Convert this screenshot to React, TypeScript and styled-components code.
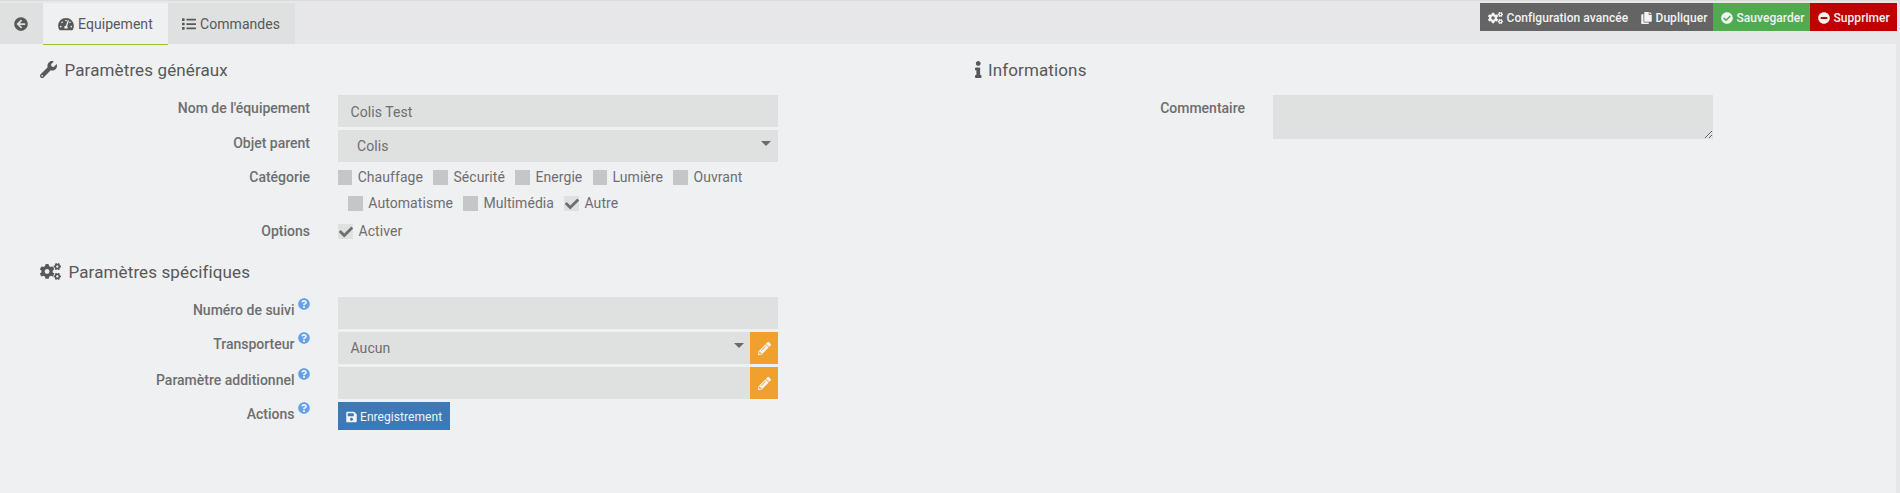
import React from 'react';
import styled, { createGlobalStyle } from 'styled-components';
import {
  FaArrowCircleLeft,
  FaCheck,
  FaCheckCircle,
  FaCogs,
  FaCopy,
  FaInfo,
  FaList,
  FaMinusCircle,
  FaPencilAlt,
  FaQuestionCircle,
  FaSave,
  FaTachometerAlt,
  FaWrench,
} from 'react-icons/fa';

const GlobalStyle = createGlobalStyle`
  *, *::before, *::after { box-sizing: border-box; }
  body {
    margin: 0;
    background: #e7e7e9;
    color: #6e6e6e;
    font: 400 14px/20px Roboto, sans-serif;
    letter-spacing: 0.06px;
    overflow: hidden;
  }
  svg { display: block; flex: none; }
`;

const Page = styled.div`
  display: flex;
  flex-direction: column;
  height: 493px;
  border-top: 1px solid #dcdcde;
`;

const TopBar = styled.header`
  position: relative;
  z-index: 1;
  display: flex;
  justify-content: space-between;
  align-items: flex-start;
  height: 43px;
  padding: 2px 3px 0 0;
`;

const Tabs = styled.nav`
  display: flex;
`;

const Tab = styled.a<{ $width: number; $active?: boolean }>`
  display: flex;
  align-items: center;
  gap: 4px;
  width: ${(p) => p.$width}px;
  height: ${(p) => (p.$active ? 42 : 41)}px;
  padding: 0 0 0 ${(p) => (p.$active ? 15 : 14)}px;
  color: #585858;
  background: ${(p) => (p.$active ? '#eff0f2' : '#dfe1e0')};
  border-bottom: ${(p) => (p.$active ? '1px solid #93c925' : 'none')};
`;

const Actions = styled.div`
  display: flex;
`;

const Button = styled.button<{ $width: number; $color: string; $regular?: boolean }>`
  display: flex;
  align-items: center;
  gap: ${(p) => (p.$regular ? 3 : 3.5)}px;
  width: ${(p) => p.$width}px;
  height: 28px;
  padding: 1px 0 0 8px;
  border: 0;
  background: ${(p) => p.$color};
  color: #f3f3f3;
  font: ${(p) => (p.$regular ? 400 : 500)} 12px/18px Roboto, sans-serif;
  letter-spacing: ${(p) => (p.$regular ? 0.06 : 0.05)}px;
  white-space: nowrap;
`;

const Panel = styled.main`
  flex: 1;
  display: grid;
  grid-template-columns: 935px 1fr;
  width: 1896px;
  background: #eff0f2;
`;

const Column = styled.section`
  padding-top: 14px;
`;

const Legend = styled.h2<{ $gap: number; $height: number }>`
  display: flex;
  align-items: flex-start;
  gap: ${(p) => p.$gap}px;
  height: ${(p) => p.$height}px;
  margin: 0;
  padding-left: 40px;
  color: #585858;
  font-size: 17px;
  font-weight: 400;
  line-height: 24px;
  letter-spacing: 0.12px;

  svg { margin-top: 3px; }
`;

const Row = styled.div<{ $height?: number }>`
  display: flex;
  gap: 28px;
  height: ${(p) => p.$height ?? 35}px;
`;

const Label = styled.label<{ $top?: number }>`
  display: flex;
  justify-content: flex-end;
  gap: 3.5px;
  width: 310px;
  padding-top: ${(p) => p.$top ?? 3}px;
  font-weight: 500;
  letter-spacing: 0;
`;

const Help = styled.span`
  color: #65a0ea;
  font-size: 12px;
  margin-top: -2px;
`;

const Field = styled.div`
  display: flex;
  width: 440px;
`;

const Control = styled.div<{ $indent?: number; $top?: number; $right?: number }>`
  display: flex;
  justify-content: space-between;
  flex: 1;
  height: 32px;
  padding: ${(p) => p.$top ?? 6}px ${(p) => p.$right ?? 7}px 0 ${(p) => p.$indent ?? 12.5}px;
  background: #dfe1e0;
`;

const Caret = styled.span`
  width: 10px;
  height: 5px;
  margin-top: 5px;
  background: #6b6b6b;
  clip-path: polygon(0 0, 100% 0, 50% 100%);
`;

const EditButton = styled.button`
  display: grid;
  place-items: center;
  width: 28px;
  height: 32px;
  padding: 1px 0 0 1px;
  border: 0;
  background: #f0a02c;
  color: #f3f3f3;
`;

const TextArea = styled.textarea`
  display: block;
  width: 440px;
  height: 44px;
  padding: 6px 12px;
  border: 0;
  background: #dfe1e0;
  resize: vertical;
`;

const Checks = styled.div`
  display: flex;
  flex-direction: column;
  width: 440px;
  padding-top: 2px;
`;

const CheckLine = styled.div<{ $indent?: number }>`
  display: flex;
  gap: 10px;
  height: 26px;
  padding-left: ${(p) => p.$indent ?? 0}px;
`;

const CheckItem = styled.label<{ $width?: number }>`
  display: flex;
  gap: 5.5px;
  width: ${(p) => (p.$width ? `${p.$width}px` : 'auto')};
  white-space: nowrap;
`;

const Box = styled.span<{ $checked?: boolean }>`
  display: grid;
  place-items: center;
  width: 15px;
  height: 15px;
  margin-top: 3px;
  background: ${(p) => (p.$checked ? '#dfe1e0' : '#c6c6c6')};
`;

type CheckProps = { text: string; width?: number; checked?: boolean };

const Check = ({ text, width, checked }: CheckProps) => (
  <CheckItem $width={width}>
    <Box $checked={checked}>{checked && <FaCheck size={14} />}</Box>
    {text}
  </CheckItem>
);

const HelpLabel = ({ text, top }: { text: string; top: number }) => (
  <Label $top={top}>
    {text}
    <Help>
      <FaQuestionCircle />
    </Help>
  </Label>
);

export default function App() {
  return (
    <>
      <GlobalStyle />
      <Page>
        <TopBar>
          <Tabs>
            <Tab $width={43}>
              <FaArrowCircleLeft size={14} />
            </Tab>
            <Tab $width={125} $active>
              <FaTachometerAlt style={{ width: 16, height: 14 }} />
              Equipement
            </Tab>
            <Tab $width={127}>
              <FaList size={14} />
              Commandes
            </Tab>
          </Tabs>
          <Actions>
            <Button $width={153} $color="#646464">
              <FaCogs style={{ width: 15, height: 12 }} />
              Configuration avancée
            </Button>
            <Button $width={80} $color="#646464">
              <FaCopy style={{ width: 11, height: 12 }} />
              Dupliquer
            </Button>
            <Button $width={97} $color="#50aa50">
              <FaCheckCircle />
              Sauvegarder
            </Button>
            <Button $width={87} $color="#be0000">
              <FaMinusCircle />
              Supprimer
            </Button>
          </Actions>
        </TopBar>
        <Panel>
          <Column>
            <Legend $gap={7.5} $height={37}>
              <FaWrench size={17} />
              Paramètres généraux
            </Legend>
            <Row>
              <Label>Nom de l'équipement</Label>
              <Field>
                <Control $top={7}>Colis Test</Control>
              </Field>
            </Row>
            <Row>
              <Label>Objet parent</Label>
              <Field>
                <Control $indent={19}>
                  Colis
                  <Caret />
                </Control>
              </Field>
            </Row>
            <Row $height={54}>
              <Label $top={2}>Catégorie</Label>
              <Checks>
                <CheckLine>
                  <Check text="Chauffage" width={85} />
                  <Check text="Sécurité" width={72} />
                  <Check text="Energie" width={68} />
                  <Check text="Lumière" width={70} />
                  <Check text="Ouvrant" />
                </CheckLine>
                <CheckLine $indent={10}>
                  <Check text="Automatisme" width={105} />
                  <Check text="Multimédia" width={91} />
                  <Check text="Autre" checked />
                </CheckLine>
              </Checks>
            </Row>
            <Row $height={41}>
              <Label $top={2}>Options</Label>
              <Checks>
                <CheckLine>
                  <Check text="Activer" checked />
                </CheckLine>
              </Checks>
            </Row>
            <Legend $gap={7.5} $height={37}>
              <FaCogs style={{ width: 21, height: 17 }} />
              Paramètres spécifiques
            </Legend>
            <Row>
              <HelpLabel text="Numéro de suivi" top={3} />
              <Field>
                <Control />
              </Field>
            </Row>
            <Row>
              <HelpLabel text="Transporteur" top={2} />
              <Field>
                <Control $right={6}>
                  Aucun
                  <Caret />
                </Control>
                <EditButton>
                  <FaPencilAlt size={13} />
                </EditButton>
              </Field>
            </Row>
            <Row>
              <HelpLabel text="Paramètre additionnel" top={3} />
              <Field>
                <Control />
                <EditButton>
                  <FaPencilAlt size={13} />
                </EditButton>
              </Field>
            </Row>
            <Row>
              <HelpLabel text="Actions" top={2} />
              <Field>
                <Button $width={112} $color="#3d79b7" $regular>
                  <FaSave style={{ width: 11, height: 12 }} />
                  Enregistrement
                </Button>
              </Field>
            </Row>
          </Column>
          <Column>
            <Legend $gap={6.5} $height={37}>
              <FaInfo style={{ width: 6.5, height: 17 }} />
              Informations
            </Legend>
            <Row>
              <Label>Commentaire</Label>
              <TextArea />
            </Row>
          </Column>
        </Panel>
      </Page>
    </>
  );
}
